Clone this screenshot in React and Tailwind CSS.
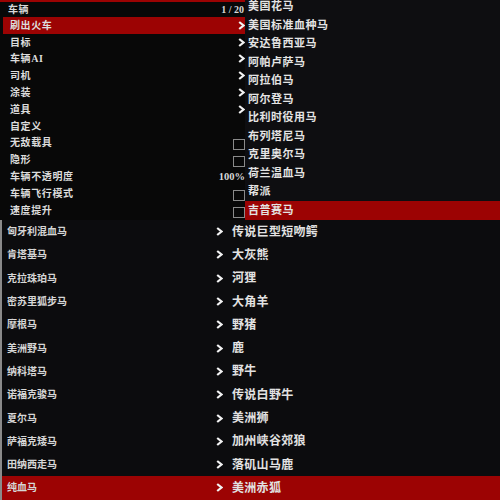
import React from "react";

const FONT = { fontFamily: '"Liberation Serif", "Noto Sans CJK SC", serif' };

const Chev = ({ className = "" }) => (
  <svg viewBox="0 0 7 9" className={className} fill="none">
    <path d="M1.2 1 L5.5 4.5 L1.2 8" stroke="#f2f2f2" strokeWidth="2.2" strokeLinejoin="miter" />
  </svg>
);

const Box = () => <div className="w-[12px] h-[11px] border border-[#8a8a8a] mt-[4px]" />;

const P1 = [
  { t: "刷出火车", hl: true, k: "chev" },
  { t: "目标", k: "chev" },
  { t: "车辆AI", k: "chev" },
  { t: "司机", k: "chev" },
  { t: "涂装", k: "chev" },
  { t: "道具", k: "chev" },
  { t: "自定义" },
  { t: "无敌载具", k: "box" },
  { t: "隐形", k: "box" },
  { t: "车辆不透明度", k: "val" },
  { t: "车辆飞行模式", k: "box" },
  { t: "速度提升", k: "box" },
];

const P2 = [
  "美国花马",
  "美国标准血种马",
  "安达鲁西亚马",
  "阿帕卢萨马",
  "阿拉伯马",
  "阿尔登马",
  "比利时役用马",
  "布列塔尼马",
  "克里奥尔马",
  "荷兰温血马",
  "帮派",
  "吉普赛马",
];

const P3 = [
  ["匈牙利混血马", "传说巨型短吻鳄"],
  ["肯塔基马", "大灰熊"],
  ["克拉珠珀马", "河狸"],
  ["密苏里狐步马", "大角羊"],
  ["摩根马", "野猪"],
  ["美洲野马", "鹿"],
  ["纳科塔马", "野牛"],
  ["诺福克骏马", "传说白野牛"],
  ["夏尔马", "美洲狮"],
  ["萨福克矮马", "加州峡谷郊狼"],
  ["田纳西走马", "落矶山马鹿"],
  ["纯血马", "美洲赤狐"],
];

export default function App() {
  return (
    <div className="w-[500px] h-[500px] overflow-hidden bg-[#0b0b0d] flex flex-col text-[#e6e6e6]" style={FONT}>
      <div className="h-[220px] flex shrink-0">
        {/* panel 1 */}
        <div className="w-[245px] shrink-0 bg-[#080808] flex flex-col">
          <div className="h-[2px] bg-[#9c0303]" />
          <div className="h-[15px] flex items-center justify-between pl-[8px] pr-[1px]">
            <span className="text-[10px] font-semibold tracking-[0.5px] text-[#d8d8d8]">车辆</span>
            <span className="text-[10px] font-bold text-[#d8d8d8]">1 / 20</span>
          </div>
          {P1.map((r) => (
            <div
              key={r.t}
              className={`h-[16.8px] ml-[3px] pl-[7px] flex items-center justify-between ${r.hl ? "bg-[#9c0303]" : ""}`}
            >
              <span className="text-[10px] font-semibold tracking-[0.6px] text-[#dcdcdc]">{r.t}</span>
              {r.k === "chev" && <Chev className="w-[7px] h-[9px]" />}
              {r.k === "box" && <Box />}
              {r.k === "val" && <span className="text-[10.5px] font-bold text-[#d8d8d8]">100%</span>}
            </div>
          ))}
        </div>
        {/* panel 2 */}
        <div className="flex-1 bg-[#0e0e11] overflow-hidden">
          <div className="-mt-[3px] flex flex-col">
            {P2.map((t, i) => (
              <div
                key={t}
                className={`h-[18.55px] pl-[3px] flex items-center ${i === 11 ? "bg-[#9c0303]" : ""}`}
              >
                <span className="text-[11px] font-semibold tracking-[0.5px] text-[#e4e4e4]">{t}</span>
              </div>
            ))}
          </div>
        </div>
      </div>
      {/* panel 3 */}
      <div className="flex-1 flex flex-col border-l-2 border-[#8a8a8a] bg-[#0c0c0e]">
        {P3.map(([a, b], i) => (
          <div key={a} className={`h-[23.3px] shrink-0 flex items-center ${i === 11 ? "bg-[#9c0303]" : ""}`}>
            <span className="w-[214px] pl-[5px] text-[10px] font-semibold text-[#d6d6d6]">{a}</span>
            <Chev className="w-[7px] h-[9px]" />
            <span className="ml-[9px] text-[12px] font-semibold tracking-[0.3px] text-[#e2e2e2]">{b}</span>
          </div>
        ))}
      </div>
    </div>
  );
}
